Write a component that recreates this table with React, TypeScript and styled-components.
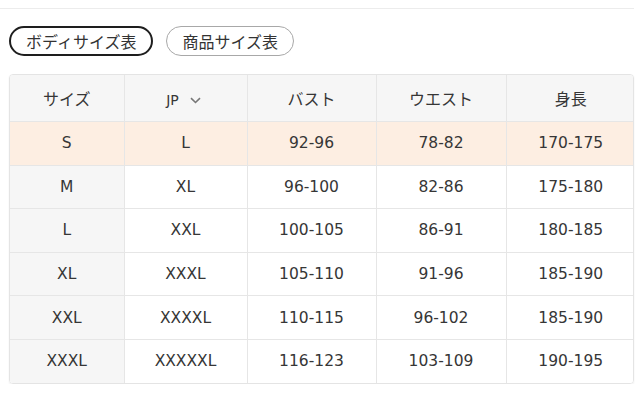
import styled, { createGlobalStyle } from 'styled-components'

type Row = {
	size: string
	jp: string
	bust: string
	waist: string
	height: string
}

const rows: Row[] = [
	{ size: 'S', jp: 'L', bust: '92-96', waist: '78-82', height: '170-175' },
	{ size: 'M', jp: 'XL', bust: '96-100', waist: '82-86', height: '175-180' },
	{ size: 'L', jp: 'XXL', bust: '100-105', waist: '86-91', height: '180-185' },
	{ size: 'XL', jp: 'XXXL', bust: '105-110', waist: '91-96', height: '185-190' },
	{ size: 'XXL', jp: 'XXXXL', bust: '110-115', waist: '96-102', height: '185-190' },
	{ size: 'XXXL', jp: 'XXXXXL', bust: '116-123', waist: '103-109', height: '190-195' },
]

const colWidths = [114, 123, 129, 130, 129]

const App = (): JSX.Element => {
	return (
		<Page>
			<GlobalStyle />
			<TopRule />
			<Tabs>
				<TabButton active>ボディサイズ表</TabButton>
				<TabButton>商品サイズ表</TabButton>
			</Tabs>
			<TableWrap>
				<SizeTable>
					<colgroup>
						{colWidths.map((w, i) => (
							<col key={i} style={{ width: w }} />
						))}
					</colgroup>
					<thead>
						<tr>
							<HeadCell>サイズ</HeadCell>
							<HeadCell>
								<UnitLabel>
									JP
									<Chevron viewBox="0 0 11 7">
										<path d="M1 1.2l4.5 4.3 4.5-4.3" />
									</Chevron>
								</UnitLabel>
							</HeadCell>
							<HeadCell>バスト</HeadCell>
							<HeadCell>ウエスト</HeadCell>
							<HeadCell>身長</HeadCell>
						</tr>
					</thead>
					<tbody>
						{rows.map((r, i) => (
							<BodyRow key={r.size} highlighted={i === 0}>
								<SizeCell>{r.size}</SizeCell>
								<Cell>{r.jp}</Cell>
								<Cell>{r.bust}</Cell>
								<Cell>{r.waist}</Cell>
								<Cell>{r.height}</Cell>
							</BodyRow>
						))}
					</tbody>
				</SizeTable>
			</TableWrap>
		</Page>
	)
}

export default App

const GlobalStyle = createGlobalStyle`
	html, body {
		margin: 0;
		padding: 0;
		background: #fff;
	}
	body {
		font-family: 'DejaVu Sans', 'Noto Sans CJK JP', sans-serif;
		color: #363636;
	}
`

const Page = styled.div`
	width: 640px;
	padding: 0 6px 0 9px;
	box-sizing: border-box;
`

const TopRule = styled.div`
	height: 8px;
	margin-left: -9px;
	border-bottom: 1px solid #ececec;
`

const Tabs = styled.div`
	display: flex;
	gap: 13px;
	margin-top: 17px;
`

const TabButton = styled.button<{ active?: boolean }>`
	height: 30px;
	padding: 0 15px;
	border-radius: 16px;
	background: #fff;
	color: #333;
	font-family: 'Noto Sans CJK JP', sans-serif;
	font-size: 16px;
	line-height: 1;
	cursor: pointer;
	border: ${(p) => (p.active ? '2px solid #1e1e1e' : '1px solid #a8a8a8')};
`

const TableWrap = styled.div`
	margin-top: 18px;
	border: 1px solid #e4e4e4;
	border-radius: 4px;
	overflow: hidden;
	box-shadow: 0 1px 2px rgba(0, 0, 0, 0.07);
`

const SizeTable = styled.table`
	width: 100%;
	border-collapse: collapse;
	table-layout: fixed;
	font-size: 15.5px;
	text-align: center;
`

const HeadCell = styled.th`
	height: 46px;
	padding: 0;
	background: #f6f6f6;
	font-weight: normal;
	font-size: 16px;
	border-right: 1px solid #e6e6e6;
	border-bottom: 1px solid #e6e6e6;
	font-family: 'Noto Sans CJK JP', sans-serif;

	&:last-child {
		border-right: none;
	}
`

const UnitLabel = styled.span`
	display: inline-flex;
	align-items: center;
	gap: 11px;
	font-family: 'DejaVu Sans', sans-serif;
	font-size: 14px;
	margin-left: -4px;
`

const Chevron = styled.svg`
	width: 11px;
	height: 7px;
	fill: none;
	stroke: #777;
	stroke-width: 1.6;
`

const BodyRow = styled.tr<{ highlighted?: boolean }>`
	background: ${(p) => (p.highlighted ? '#fdeee2' : '#fff')};

	&:last-child td {
		border-bottom: none;
	}
`

const Cell = styled.td`
	height: 42.6px;
	padding: 0;
	border-right: 1px solid #e6e6e6;
	border-bottom: 1px solid #e6e6e6;

	&:last-child {
		border-right: none;
	}
`

const SizeCell = styled(Cell)`
	background: #f6f6f6;

	${BodyRow}:first-child & {
		background: #fdeee2;
	}
`
